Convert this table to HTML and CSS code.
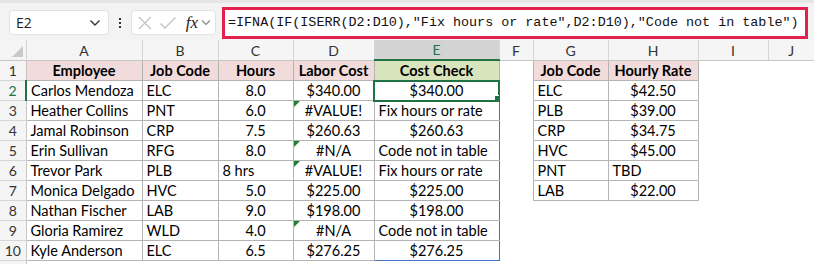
FILE: index.html
```html
<!DOCTYPE html>
<html>
<head>
<meta charset="utf-8">
<link rel="stylesheet" href="styles.css">
</head>
<body>
<div class="toolbar">
  <div class="namebox">
    <span class="name">E2</span>
    <svg class="chev" width="12" height="8" viewBox="0 0 12 8"><path d="M1.5 1.5 L6 6 L10.5 1.5" fill="none" stroke="#333" stroke-width="1.4"/></svg>
  </div>
  <div class="dots"><i></i><i></i><i></i></div>
  <div class="fbtns">
    <svg width="16" height="16" viewBox="0 0 16 16"><path d="M2 2 L14 14 M14 2 L2 14" stroke="#c4c4c4" stroke-width="1.3" fill="none"/></svg>
    <svg width="18" height="16" viewBox="0 0 18 16"><path d="M1.5 8.5 L6 13 L16.5 2.5" stroke="#c4c4c4" stroke-width="1.3" fill="none"/></svg>
    <span class="fx">fx</span>
    <svg width="10" height="7" viewBox="0 0 10 7"><path d="M1 1.5 L5 5.5 L9 1.5" fill="none" stroke="#888" stroke-width="1.2"/></svg>
  </div>
  <div class="formula">=IFNA(IF(ISERR(D2:D10),"Fix hours or rate",D2:D10),"Code not in table")</div>
</div>
<table class="sheet">
  <colgroup>
    <col style="width:26px"><col style="width:116px"><col style="width:76px"><col style="width:75px"><col style="width:81px"><col style="width:125px"><col style="width:34px"><col style="width:75px"><col style="width:90px"><col style="width:70px"><col style="width:46px">
  </colgroup>
  <tr class="colhead">
    <th class="corner"><span class="tri"></span></th><th>A</th><th>B</th><th>C</th><th>D</th><th class="sel">E</th><th>F</th><th>G</th><th>H</th><th>I</th><th class="last">J</th>
  </tr>
  <tr>
    <td class="rh">1</td><td class="hd">Employee</td><td class="hd">Job Code</td><td class="hd">Hours</td><td class="hd">Labor Cost</td><td class="hd green">Cost Check</td><td class="empty"></td><td class="hd">Job Code</td><td class="hd">Hourly Rate</td><td class="empty"></td><td class="empty"></td>
  </tr>
  <tr>
    <td class="rh act">2</td><td class="b">Carlos Mendoza</td><td class="b">ELC</td><td class="b c">8.0</td><td class="b c">$340.00</td><td class="b c sp top active"><div class="handle"></div>$340.00</td><td class="empty"></td><td class="b">ELC</td><td class="b c">$42.50</td><td class="empty"></td><td class="empty"></td>
  </tr>
  <tr>
    <td class="rh">3</td><td class="b">Heather Collins</td><td class="b">PNT</td><td class="b c">6.0</td><td class="b c err"><span class="flag"></span>#VALUE!</td><td class="b sp">Fix hours or rate</td><td class="empty"></td><td class="b">PLB</td><td class="b c">$39.00</td><td class="empty"></td><td class="empty"></td>
  </tr>
  <tr>
    <td class="rh">4</td><td class="b">Jamal Robinson</td><td class="b">CRP</td><td class="b c">7.5</td><td class="b c">$260.63</td><td class="b c sp">$260.63</td><td class="empty"></td><td class="b">CRP</td><td class="b c">$34.75</td><td class="empty"></td><td class="empty"></td>
  </tr>
  <tr>
    <td class="rh">5</td><td class="b">Erin Sullivan</td><td class="b">RFG</td><td class="b c">8.0</td><td class="b c err"><span class="flag"></span>#N/A</td><td class="b sp">Code not in table</td><td class="empty"></td><td class="b">HVC</td><td class="b c">$45.00</td><td class="empty"></td><td class="empty"></td>
  </tr>
  <tr>
    <td class="rh">6</td><td class="b">Trevor Park</td><td class="b">PLB</td><td class="b">8 hrs</td><td class="b c err"><span class="flag"></span>#VALUE!</td><td class="b sp">Fix hours or rate</td><td class="empty"></td><td class="b">PNT</td><td class="b">TBD</td><td class="empty"></td><td class="empty"></td>
  </tr>
  <tr>
    <td class="rh">7</td><td class="b">Monica Delgado</td><td class="b">HVC</td><td class="b c">5.0</td><td class="b c">$225.00</td><td class="b c sp">$225.00</td><td class="empty"></td><td class="b">LAB</td><td class="b c">$22.00</td><td class="empty"></td><td class="empty"></td>
  </tr>
  <tr>
    <td class="rh">8</td><td class="b">Nathan Fischer</td><td class="b">LAB</td><td class="b c">9.0</td><td class="b c">$198.00</td><td class="b c sp">$198.00</td><td class="empty"></td><td class="empty"></td><td class="empty"></td><td class="empty"></td><td class="empty"></td>
  </tr>
  <tr>
    <td class="rh">9</td><td class="b">Gloria Ramirez</td><td class="b">WLD</td><td class="b c">4.0</td><td class="b c err"><span class="flag"></span>#N/A</td><td class="b sp">Code not in table</td><td class="empty"></td><td class="empty"></td><td class="empty"></td><td class="empty"></td><td class="empty"></td>
  </tr>
  <tr>
    <td class="rh">10</td><td class="b">Kyle Anderson</td><td class="b">ELC</td><td class="b c">6.5</td><td class="b c">$276.25</td><td class="b c sp bot">$276.25</td><td class="empty"></td><td class="empty"></td><td class="empty"></td><td class="empty"></td><td class="empty"></td>
  </tr>
  <tr class="r11">
    <td class="rh"></td><td class="empty"></td><td class="empty"></td><td class="empty"></td><td class="empty"></td><td class="empty"></td><td class="empty"></td><td class="empty"></td><td class="empty"></td><td class="empty"></td><td class="empty"></td>
  </tr>
</table>
</body>
</html>
```
FILE: styles.css
```css
html, body {
  margin: 0;
  padding: 0;
  background: #ffffff;
  width: 814px;
  height: 264px;
  overflow: hidden;
}
body {
  font-family: Lato, "Liberation Sans", sans-serif;
  color: #000;
}
.toolbar {
  height: 40px;
  box-sizing: border-box;
  background: #f3f3f3;
  border-top: 3px solid #e6e6e6;
  display: flex;
  align-items: center;
  padding: 0 6px 0 9px;
}
.namebox {
  width: 100px;
  height: 25px;
  box-sizing: border-box;
  background: #fff;
  border: 1px solid #e2e2e2;
  border-radius: 4px;
  display: flex;
  align-items: center;
  justify-content: space-between;
  padding: 0 7px 0 6px;
  margin-top: 2px;
}
.name {
  font-family: "Open Sans", sans-serif;
  font-size: 14px;
  color: #222;
}
.dots {
  width: 22px;
  display: flex;
  flex-direction: column;
  align-items: center;
  gap: 2px;
  margin-top: 2px;
}
.dots i {
  display: block;
  width: 2px;
  height: 2px;
  background: #333;
}
.fbtns {
  width: 85px;
  height: 25px;
  box-sizing: border-box;
  background: #fff;
  border: 1px solid #e2e2e2;
  border-radius: 4px;
  display: flex;
  align-items: center;
  gap: 6px;
  padding: 0 4px 0 5px;
  margin-top: 2px;
}
.fx {
  font-family: "Liberation Serif", serif;
  font-style: italic;
  font-size: 17px;
  color: #222;
  margin-left: 3px;
  margin-right: -3px;
}
.formula {
  flex: 1;
  margin-left: 6px;
  height: 32px;
  box-sizing: border-box;
  border: 3px solid #e3214f;
  background: #fff;
  font-family: "Liberation Mono", monospace;
  font-size: 13.4px;
  line-height: 26px;
  padding-left: 3px;
  color: #111;
  white-space: nowrap;
  overflow: hidden;
  margin-top: 2px;
}
.sheet {
  border-collapse: collapse;
  table-layout: fixed;
  width: 814px;
  font-size: 14.5px;
}
.sheet td, .sheet th {
  height: 20px;
  padding: 0 4px;
  box-sizing: border-box;
  white-space: nowrap;
  overflow: hidden;
  line-height: 19px;
  vertical-align: bottom;
}
.colhead th {
  background: #f5f5f5;
  font-weight: normal;
  color: #333;
  font-size: 14px;
  border-right: 1px solid #d6d6d6;
  border-bottom: 1px solid #c6c6c6;
  text-align: center;
  padding: 0;
}
.colhead th.last { border-right: none; }
.colhead th.sel {
  background: #d3d3d3;
  color: #217346;
  border-bottom: 2px solid #217346;
}
.corner { position: relative; }
.tri {
  position: absolute;
  right: 3px;
  bottom: 3px;
  width: 0;
  height: 0;
  border-left: 11px solid transparent;
  border-bottom: 11px solid #c9c9c9;
}
.rh {
  background: #f5f5f5;
  color: #333;
  text-align: center;
  font-size: 14px;
  border-right: 1px solid #c6c6c6;
  border-bottom: 1px solid #d6d6d6;
  padding: 0 !important;
}
.rh.act {
  color: #217346;
  border-right: 2px solid #217346;
}
.hd {
  background: #f2dcdb;
  font-weight: bold;
  text-align: center;
  border: 1px solid #b4b4b4;
}
.hd.green { background: #d8e4bc; }
.b { border: 1px solid #b4b4b4; }
.c { text-align: center; }
.empty { border: none; }
.err { position: relative; }
.flag {
  position: absolute;
  left: 0;
  top: 0;
  width: 0;
  height: 0;
  border-top: 6px solid #1e7e34;
  border-right: 6px solid transparent;
}
.sp {
  border-left: 1px solid #4472c4;
  border-right: 1px solid #4472c4;
}
.sp.bot { border-bottom: 1px solid #4472c4; }
.active {
  position: relative;
  outline: 2px solid #217346;
  outline-offset: -1px;
}
.handle {
  position: absolute;
  right: -1px;
  bottom: -1px;
  width: 5px;
  height: 5px;
  background: #217346;
  border-left: 1px solid #fff;
  border-top: 1px solid #fff;
}
.sheet tr.r11 td { height: 4px; line-height: 4px; }
```
